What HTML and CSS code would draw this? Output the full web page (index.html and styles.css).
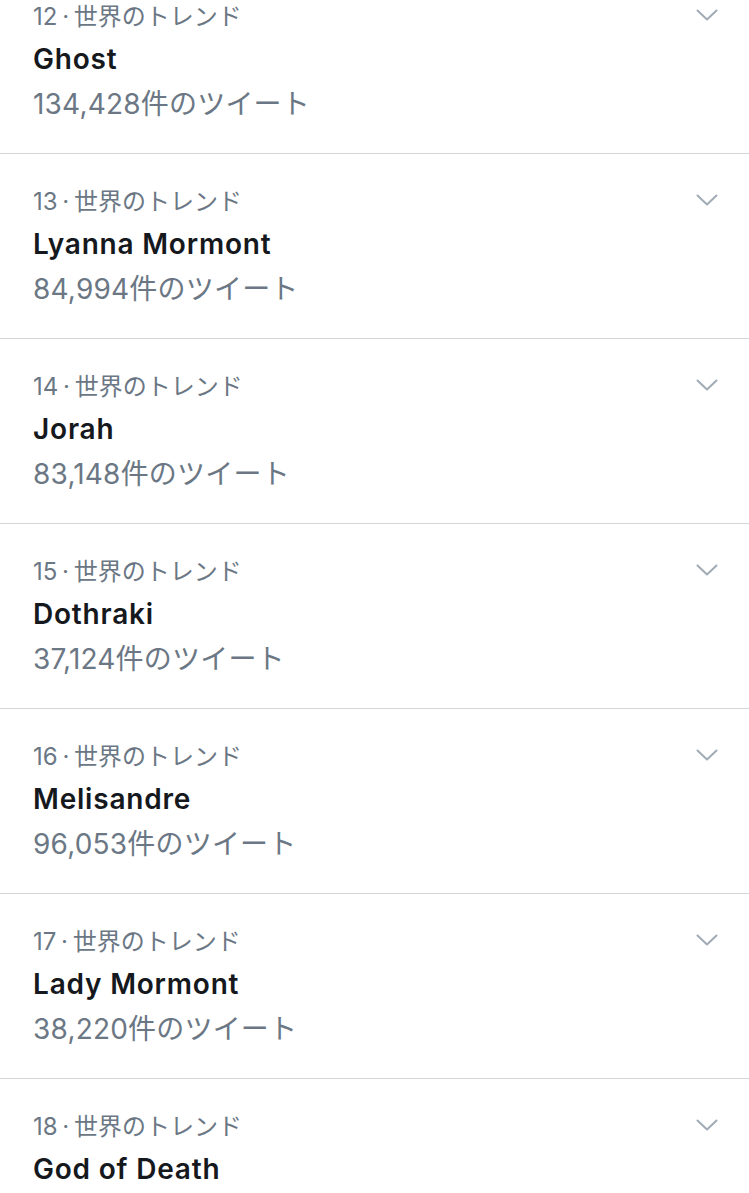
FILE: index.html
```html
<!DOCTYPE html>
<html lang="ja">
<head>
<meta charset="utf-8">
<link rel="stylesheet" href="styles.css">
</head>
<body>
<ul class="trends">
  <li class="trend">
    <div class="info">
      <div class="meta">12 · 世界のトレンド</div>
      <div class="name">Ghost</div>
      <div class="count">134,428件のツイート</div>
    </div>
    <svg class="chev" viewBox="0 0 22 13"><path d="M1.5 1.5 L11 10.5 L20.5 1.5"/></svg>
  </li>
  <li class="trend">
    <div class="info">
      <div class="meta">13 · 世界のトレンド</div>
      <div class="name">Lyanna Mormont</div>
      <div class="count">84,994件のツイート</div>
    </div>
    <svg class="chev" viewBox="0 0 22 13"><path d="M1.5 1.5 L11 10.5 L20.5 1.5"/></svg>
  </li>
  <li class="trend">
    <div class="info">
      <div class="meta">14 · 世界のトレンド</div>
      <div class="name">Jorah</div>
      <div class="count">83,148件のツイート</div>
    </div>
    <svg class="chev" viewBox="0 0 22 13"><path d="M1.5 1.5 L11 10.5 L20.5 1.5"/></svg>
  </li>
  <li class="trend">
    <div class="info">
      <div class="meta">15 · 世界のトレンド</div>
      <div class="name">Dothraki</div>
      <div class="count">37,124件のツイート</div>
    </div>
    <svg class="chev" viewBox="0 0 22 13"><path d="M1.5 1.5 L11 10.5 L20.5 1.5"/></svg>
  </li>
  <li class="trend">
    <div class="info">
      <div class="meta">16 · 世界のトレンド</div>
      <div class="name">Melisandre</div>
      <div class="count">96,053件のツイート</div>
    </div>
    <svg class="chev" viewBox="0 0 22 13"><path d="M1.5 1.5 L11 10.5 L20.5 1.5"/></svg>
  </li>
  <li class="trend">
    <div class="info">
      <div class="meta">17 · 世界のトレンド</div>
      <div class="name">Lady Mormont</div>
      <div class="count">38,220件のツイート</div>
    </div>
    <svg class="chev" viewBox="0 0 22 13"><path d="M1.5 1.5 L11 10.5 L20.5 1.5"/></svg>
  </li>
  <li class="trend">
    <div class="info">
      <div class="meta">18 · 世界のトレンド</div>
      <div class="name">God of Death</div>
    </div>
    <svg class="chev" viewBox="0 0 22 13"><path d="M1.5 1.5 L11 10.5 L20.5 1.5"/></svg>
  </li>
</ul>
</body>
</html>
```
FILE: styles.css
```css
html, body {
  margin: 0;
  padding: 0;
  background: #ffffff;
}
body {
  width: 749px;
  height: 1193px;
  overflow: hidden;
  font-family: Inter, "Noto Sans CJK JP", sans-serif;
}
.trends {
  list-style: none;
  margin: -31px 0 0 0;
  padding: 0;
}
.trend {
  display: flex;
  align-items: flex-start;
  justify-content: space-between;
  height: 184px;
  border-bottom: 1px solid #d3d6d9;
  padding: 0 31px 0 33px;
  box-sizing: content-box;
}
.info {
  display: flex;
  flex-direction: column;
  padding-top: 31px;
}
.meta {
  height: 36px;
  line-height: 34px;
  font-size: 24px;
  word-spacing: -2px;
  color: #6b7784;
  white-space: nowrap;
}
.name {
  height: 47px;
  line-height: 46px;
  font-size: 28px;
  font-weight: 600;
  letter-spacing: 0.8px;
  color: #15181c;
  white-space: nowrap;
}
.count {
  height: 42px;
  line-height: 42px;
  font-size: 28px;
  letter-spacing: 0.2px;
  color: #6b7784;
  white-space: nowrap;
}
.chev {
  width: 22px;
  height: 13px;
  margin-top: 40px;
  fill: none;
  stroke: #a0abb6;
  stroke-width: 2;
  stroke-linecap: round;
  stroke-linejoin: round;
}
```
